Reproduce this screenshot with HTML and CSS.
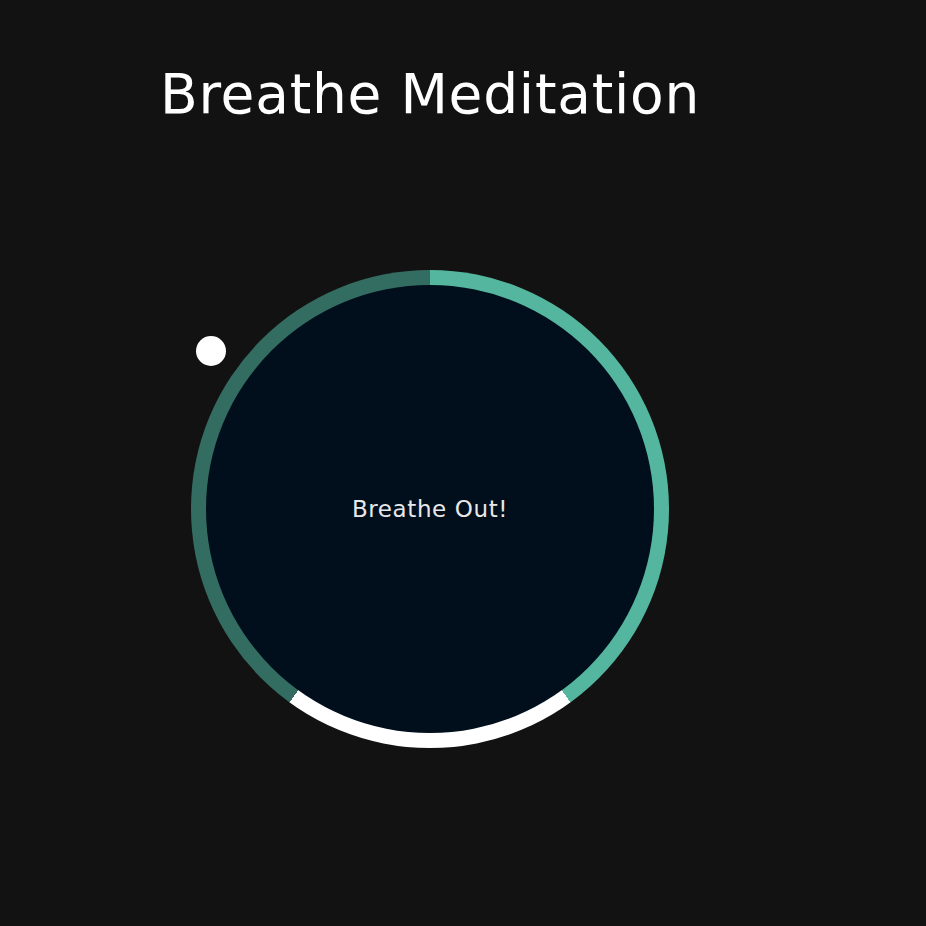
FILE: index.html
```html
<!DOCTYPE html>
<html>
<head>
<meta charset="utf-8">
<link rel="stylesheet" href="styles.css">
</head>
<body>
<main class="app">
  <h1 class="title">Breathe Meditation</h1>
  <div class="breathe">
    <div class="ring">
      <div class="core">
        <p class="label">Breathe Out!</p>
      </div>
    </div>
    <span class="pointer"></span>
  </div>
</main>
</body>
</html>
```
FILE: styles.css
```css
html, body {
  margin: 0;
  padding: 0;
  background: #121212;
  height: 100%;
}
.app {
  width: 860px;
  display: flex;
  flex-direction: column;
  align-items: center;
  font-family: "DejaVu Sans", sans-serif;
}
.title {
  margin: 62px 0 0 0;
  color: #ffffff;
  font-size: 55px;
  font-weight: 500;
  line-height: 64px;
  letter-spacing: 0.75px;
}
.breathe {
  position: relative;
  margin-top: 144px;
  width: 478px;
  height: 478px;
}
.ring {
  width: 100%;
  height: 100%;
  border-radius: 50%;
  background: conic-gradient(#55b69f 0deg 144deg, #ffffff 144deg 216deg, #336d62 216deg 360deg);
  display: flex;
  align-items: center;
  justify-content: center;
}
.core {
  width: 448px;
  height: 448px;
  border-radius: 50%;
  background: #010f1c;
  display: flex;
  align-items: center;
  justify-content: center;
}
.label {
  margin: 0;
  color: #e8e8e8;
  font-size: 23px;
  letter-spacing: 0.6px;
}
.pointer {
  position: absolute;
  left: 5px;
  top: 66px;
  width: 30px;
  height: 30px;
  border-radius: 50%;
  background: #ffffff;
}
```
